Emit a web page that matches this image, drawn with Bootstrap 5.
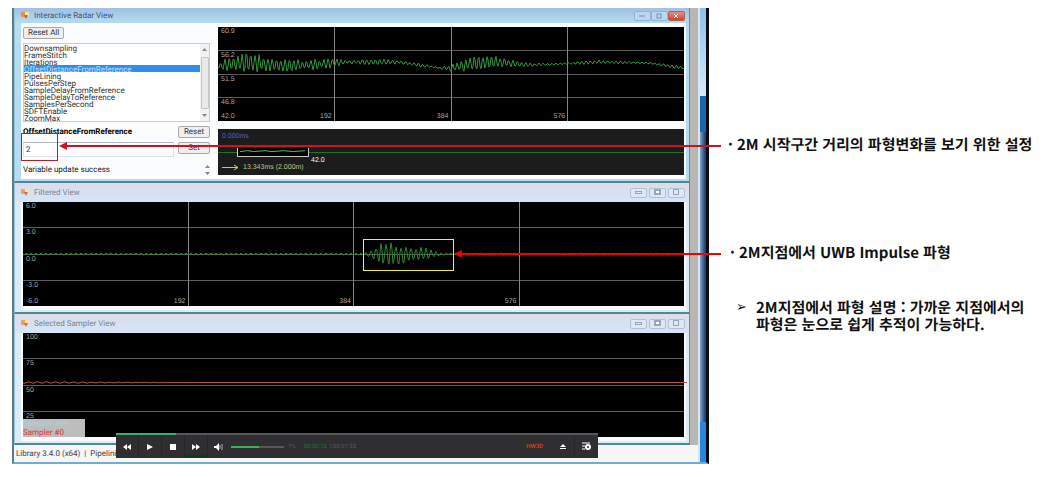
<!DOCTYPE html>
<html lang="ko">
<head>
<meta charset="utf-8">
<meta name="viewport" content="width=device-width, initial-scale=1">
<title>Radar View</title>
<link href="https://cdn.jsdelivr.net/npm/bootstrap@5.3.0/dist/css/bootstrap.min.css" rel="stylesheet">
<style>
body{font-family:Roboto,"Noto Sans CJK KR",sans-serif;font-size:8px;line-height:10px;color:#222;background:#fff;text-rendering:geometricPrecision}
button,input,select{font-family:inherit;text-rendering:inherit}
.page{display:grid;grid-template-columns:697fr 354fr;padding:8px 0 14px 12px}
.screen{background:#b9c9d6;border-left:2px solid #557f8e;border-right:3px solid #0a0c10;border-bottom:2px solid #6ab0d4}
.rail-grey{width:8px;background:#b9b7b4}
.rail-light{width:2px;background:#d8e6f0}
.rail-blue{width:6px;background:linear-gradient(90deg,#7fa6cc,#3c5f8c 60%,#26344a)}
.rail-top{height:88px;background:linear-gradient(#8cc0ea,#d5ecfa)}
.rail-mid{height:36px;background:#1c66ac}
.rail-end{height:40px;background:#2a86dc}
.win{background:#dcecf6;border-right:1px solid #5d939f;border-left:1px solid #9cc3d8;border-bottom:2px solid #4f8793;padding:0 3px 2px 6px}
.win-active{background:#b5dcf0}
.win-title{height:19px;color:#7c8794;background:linear-gradient(#dcdcea,#d3e6f8);margin:0 -3px 0 -6px;padding:0 4px 0 6px}
.win-active .win-title{height:15px;color:#3a5878;background:linear-gradient(#a2bfe4,#b5dcef)}
.win-title .gap-narrow{gap:2px}
.client{background:#fbfcfd;padding:0 2px 4px 2px}
.win-active .client{padding-top:4px}
.ctl{width:17px;height:10px;padding:0;border:1px solid #b4c0d4;border-radius:2px;background:#dde8f6;display:flex;align-items:center;justify-content:center}
.win-active .ctl{border-color:#92b3d6;background:#bcd6ee}
.win-active .ctl-close{background:linear-gradient(#e8907c,#d0432a);border-color:#b8604e}
.side{width:195px}
.btn-win{font-size:8px;line-height:10px;padding:0 4px;border:1px solid #a9a9a9;border-radius:2px;background:#efefef;color:#333}
.btn-pair{width:32px}
.listing{border:1px solid #c9ccd0;height:79px;background:#fff}
.listing select{border:0;outline:0;padding:0;overflow:hidden;background:#fff;height:77px;font-size:8px;color:#333}
.listing option{font-size:8px;line-height:7px;height:7px;min-height:7px;padding:0}
.listing option:checked{background:#2f8eec linear-gradient(#2f8eec,#2f8eec);color:#bfe0ff}
.bar-v{width:9px;background:#f2f2f2;color:#777}
.thumb{width:8px;height:52px;border:1px solid #c6c6c6;border-radius:1px;background:#e9e9e9}
.val{height:15px;border:1px solid #e0e4e8;border-top-color:#b3bcc4;padding:0 2px;font-size:8px;min-width:0;background:#fff;color:#334}
.plot{position:relative;background:#000;color:#a6a6a6;font-family:"Liberation Sans",sans-serif;font-size:7px;line-height:7px;display:flex;flex-direction:column}
.plot-a{height:94px}.plot-b{height:46px;background:#1c1c1c}.plot-c{height:104px}
.lane{flex:1 1 0;padding:1px 3px;display:flex;flex-direction:column;justify-content:space-between}
.lane + .lane{border-top:1px solid #5c5c5c}
.over{position:absolute;inset:0}
.tick{flex:1 1 0;display:flex;align-items:flex-end;justify-content:flex-end;padding:1px 2px}
.tick + .tick{border-left:1px solid #858585}
.plot svg{width:100%;height:100%;display:block;overflow:visible}
.plot path{fill:none;stroke-width:1;vector-effect:non-scaling-stroke}
.legend-box{position:absolute;left:0;bottom:0;width:62px;height:18px;background:#bdbdbd;font-family:Roboto,sans-serif;font-size:8px;line-height:9px}
.sel{position:absolute;left:19px;width:72px;top:19px;height:9px;border:1px solid #c8c8c8;border-top:0;background:#000}
.player{position:absolute;left:102px;right:108px;bottom:4px;background:#2f2f31;color:#5a5a5c;font-size:6px}
.track{height:2px;background:#58585a}
.track div{height:2px;background:#3fae5f}
.pbtn{width:23px;height:23px;padding:0;border:0;border-right:1px solid #27272a;background:transparent;display:flex;align-items:center;justify-content:center}
.pbtn-hot{box-shadow:inset 0 -3px #123a1c}
.status{height:17px;background:#f6f6f6;color:#444;padding:4px 2px}
.mark-box{position:absolute;left:7px;top:125px;width:37px;height:28px;border:1px solid #c01828}
.pick{position:absolute;left:349px;top:231px;width:91px;height:32px;border:1px solid #f2f23a}
.arrow{position:absolute;right:-15px;height:9px;display:flex;align-items:center}
.arrow::before{content:"";border:4px solid transparent;border-right:8px solid currentColor;border-left:0}
.arrow::after{content:"";flex:1;height:2px;background:currentColor}
.arrow-1{left:45px;top:133px;color:#d01020}
.arrow-2{left:440px;top:241px;color:#f00000}
.notes{font-family:"Noto Sans CJK KR",sans-serif;font-weight:700;font-size:15px;line-height:17px;color:#111;padding:128px 0 0 19px}
.notes li{display:flex;gap:4px}
.n2{margin:91px 0 0 2px}.n3{margin:38px 0 0 8px}
.bul{width:5px}.bul-a{width:16px;font-family:"DejaVu Sans",sans-serif;font-weight:400;font-size:13px}
</style>
</head>
<body>
<main class="page">
<section class="screen position-relative d-flex">
 <div class="flex-fill d-flex flex-column" style="min-width:0">
  <div class="d-flex">
   <div class="flex-fill" style="min-width:0">
    <article class="win win-active">
     <header class="win-title d-flex align-items-center gap-1">
      <svg width="9" height="9" viewBox="0 0 9 9"><rect y="1" width="5" height="5" rx="1" fill="#e8913c"/><rect x="4" y="1" width="4" height="4" fill="#f5e6a8"/><path d="M3 4h4l-2 4z" fill="#b9683a"/></svg>
      <span class="me-auto">Interactive Radar View</span>
      <div class="d-flex">
       <button class="ctl" aria-label="Minimize"><svg width="7" height="5"><path d="M0 3h6" stroke="#6c8fb5"/></svg></button>
       <button class="ctl" aria-label="Maximize"><svg width="7" height="6"><rect x="1" y="1" width="4" height="4" fill="none" stroke="#6c8fb5"/></svg></button>
       <button class="ctl ctl-close" aria-label="Close"><svg width="7" height="6"><path d="M1 1l4 4M5 1l-4 4" stroke="#fff"/></svg></button>
      </div>
     </header>
     <div class="client d-flex">
      <form class="side d-flex flex-column pe-2">
       <div class="pb-1"><button type="button" class="btn-win">Reset All</button></div>
       <div class="listing d-flex">
        <select size="11" class="flex-fill" aria-label="Variable">
         <option>Downsampling</option><option>FrameStitch</option><option>Iterations</option><option selected>OffsetDistanceFromReference</option><option>PipeLining</option><option>PulsesPerStep</option><option>SampleDelayFromReference</option><option>SampleDelayToReference</option><option>SamplesPerSecond</option><option>SDFTEnable</option><option>ZoomMax</option>
        </select>
        <div class="bar-v d-flex flex-column align-items-center justify-content-between py-1">
         <svg width="5" height="3"><path d="M0 3l2.500-3 2.500 3z" fill="#888"/></svg><div class="thumb"></div><svg width="5" height="3"><path d="M0 0h5L2.500 3z" fill="#888"/></svg>
        </div>
       </div>
       <div class="d-flex justify-content-between align-items-center pt-1"><label for="v" class="fw-bold text-black">OffsetDistanceFromReference</label><button type="button" class="btn-win btn-pair">Reset</button></div>
       <div class="d-flex pt-1 gap-1"><input id="v" class="val flex-fill" value="2"><button type="button" class="btn-win btn-pair align-self-start">Set</button></div>
       <div class="d-flex justify-content-between pt-2"><span>Variable update success</span><svg width="5" height="10"><path d="M0 3l2.500-3 2.500 3zM0 7h5L2.500 10z" fill="#888"/></svg></div>
      </form>
      <div class="flex-fill d-flex flex-column gap-2">
       <div class="plot plot-a">
        <div class="lane">60.9</div><div class="lane">56.2</div><div class="lane">51.5</div><div class="lane"><span>46.8</span><span>42.0</span></div>
        <div class="over d-flex"><div class="tick">192</div><div class="tick">384</div><div class="tick">576</div><div class="tick"></div></div>
        <div class="over"><svg viewBox="0 0 466 94" preserveAspectRatio="none"><path id="radar" stroke="#2f9a3c"/></svg></div>
       </div>
       <div class="plot plot-b justify-content-between p-1">
        <span style="color:#5560c8">0.000ms</span>
        <div class="over"><svg viewBox="0 0 466 46" preserveAspectRatio="none"><path d="M0 23.500H466" stroke="#127a2c"/></svg></div>
        <div class="sel"><svg viewBox="0 0 72 9" preserveAspectRatio="none"><path d="M2 4l8-1 6 1 12-1 7 1 12-1 10 1 12-1" stroke="#2fd070"/></svg></div>
        <span class="position-absolute text-light" style="left:93px;top:28px">42.0</span>
        <span class="d-flex gap-1" style="color:#c4c484"><svg style="width:17px;height:7px" viewBox="0 0 17 7"><path d="M0 3.500h16M12 1l4 2.500L12 6" stroke="#c4c484"/></svg>13.343ms (2.000m)</span>
       </div>
      </div>
     </div>
    </article>
    <article class="win">
     <header class="win-title d-flex align-items-center gap-1">
      <svg width="9" height="9" viewBox="0 0 9 9"><rect y="1" width="5" height="5" rx="1" fill="#e8a35c"/><rect x="4" y="1" width="4" height="4" fill="#f5e6a8"/><path d="M3 4h4l-2 4z" fill="#b9785a"/></svg>
      <span class="me-auto">Filtered View</span>
      <div class="d-flex gap-narrow">
       <button class="ctl" aria-label="Minimize"><svg width="7" height="5"><rect x="0.500" y="1.500" width="6" height="2" fill="none" stroke="#98a6ba"/></svg></button>
       <button class="ctl" aria-label="Maximize"><svg width="7" height="7"><rect x="0.500" y="0.500" width="6" height="5" fill="#98a6ba" stroke="#98a6ba"/><rect x="2" y="2" width="3" height="2" fill="#fff"/></svg></button>
       <button class="ctl" aria-label="Close"><svg width="7" height="7"><rect x="0.500" y="0.500" width="5" height="5" fill="none" stroke="#98a6ba"/></svg></button>
      </div>
     </header>
     <div class="client">
      <div class="plot plot-c">
       <div class="lane">6.0</div><div class="lane">3.0</div><div class="lane">0.0</div><div class="lane"><span>-3.0</span><span>-6.0</span></div>
       <div class="over d-flex"><div class="tick">192</div><div class="tick">384</div><div class="tick">576</div><div class="tick"></div></div>
       <div class="over"><svg viewBox="0 0 661 104" preserveAspectRatio="none"><path id="filtered" stroke="#2b8a30"/></svg></div>
      </div>
     </div>
    </article>
    <article class="win">
     <header class="win-title d-flex align-items-center gap-1">
      <svg width="9" height="9" viewBox="0 0 9 9"><rect y="1" width="5" height="5" rx="1" fill="#e8a35c"/><rect x="4" y="1" width="4" height="4" fill="#f5e6a8"/><path d="M3 4h4l-2 4z" fill="#b9785a"/></svg>
      <span class="me-auto">Selected Sampler View</span>
      <div class="d-flex gap-narrow">
       <button class="ctl" aria-label="Minimize"><svg width="7" height="5"><rect x="0.500" y="1.500" width="6" height="2" fill="none" stroke="#98a6ba"/></svg></button>
       <button class="ctl" aria-label="Maximize"><svg width="7" height="7"><rect x="0.500" y="0.500" width="6" height="5" fill="#98a6ba" stroke="#98a6ba"/><rect x="2" y="2" width="3" height="2" fill="#fff"/></svg></button>
       <button class="ctl" aria-label="Close"><svg width="7" height="7"><rect x="0.500" y="0.500" width="5" height="5" fill="none" stroke="#98a6ba"/></svg></button>
      </div>
     </header>
     <div class="client">
      <div class="plot plot-c">
       <div class="lane">100</div><div class="lane">75</div><div class="lane">50</div><div class="lane">25</div>
       <div class="over"><svg viewBox="0 0 661 104" preserveAspectRatio="none"><path id="sampler" stroke="#b4544e"/></svg></div>
       <div class="legend-box"><div style="color:#a9d4d8">Sampler #39</div><div class="text-danger">Sampler #0</div></div>
      </div>
     </div>
    </article>
   </div>
   <div class="rail-grey"></div>
  </div>
  <footer class="status mt-auto">Library 3.4.0 (x64) &nbsp;|&nbsp; Pipelining</footer>
 </div>
 <div class="rail-light"></div>
 <div class="rail-blue d-flex flex-column"><div class="rail-top"></div><div class="rail-mid"></div><div class="rail-end mt-auto"></div></div>
 <div class="player">
  <div class="track"><div style="width:12.5%"></div></div>
  <div class="d-flex align-items-center">
   <button class="pbtn" aria-label="Rewind"><svg width="9" height="6"><path d="M4 0v6L0 3zM8 0v6L4 3z" fill="#fff"/></svg></button>
   <button class="pbtn" aria-label="Play"><svg width="6" height="6"><path d="M0 0l6 3-6 3z" fill="#fff"/></svg></button>
   <button class="pbtn" aria-label="Stop"><svg width="6" height="6"><rect width="6" height="6" fill="#fff"/></svg></button>
   <button class="pbtn pbtn-hot" aria-label="Forward"><svg width="9" height="6"><path d="M0 0v6l4-3zM4 0v6l4-3z" fill="#fff"/></svg></button>
   <button class="pbtn border-0" aria-label="Volume"><svg width="11" height="8"><path d="M0 3h2l3-3v8L2 5H0z" fill="#fff"/><path d="M6 2v4M8 1v6" stroke="#aaa" fill="none"/></svg></button>
   <div style="width:53px" class="track"><div style="width:53%"></div></div>
   <span class="ms-1">1%</span>
   <span class="ms-2"><span style="color:#25713c">00:00:12</span> &nbsp;|&nbsp;00:01:35</span>
   <span class="ms-auto me-2 fw-bold" style="color:#c8400f">HW3D</span>
   <button class="pbtn" style="width:24px" aria-label="Eject"><svg width="6" height="6"><path d="M3 0l3 3H0zM0 4h6v1H0z" fill="#fff"/></svg></button>
   <button class="pbtn border-0" aria-label="Playlist"><svg width="10" height="9"><path d="M0 1h8M0 4h3M0 7h3" stroke="#fff" fill="none"/><circle cx="6" cy="5" r="2" fill="none" stroke="#fff" stroke-width="2"/></svg></button>
  </div>
 </div>
 <div class="mark-box"></div><div class="pick"></div>
 <div class="arrow arrow-1"></div><div class="arrow arrow-2"></div>
</section>
<ul class="notes list-unstyled mb-0">
 <li><span class="bul">·</span><span>2M 시작구간 거리의 파형변화를 보기 위한 설정</span></li>
 <li class="n2"><span class="bul">·</span><span>2M지점에서 UWB Impulse 파형</span></li>
 <li class="n3"><span class="bul-a">➢</span><span>2M지점에서 파형 설명 : 가까운 지점에서의<br>파형은 눈으로 쉽게 추적이 가능하다.</span></li>
</ul>
</main>
<script src="https://cdn.jsdelivr.net/npm/bootstrap@5.3.0/dist/js/bootstrap.bundle.min.js"></script>
<script>
// Each key point is [x, centre, amplitude]; values between are interpolated.
function trace(id, keys, step, period) {
  let seed = 7, d = "", i = 0;
  const end = keys[keys.length - 1][0];
  for (let x = 0; x <= end; x += step) {
    while (i < keys.length - 2 && x > keys[i + 1][0]) i++;
    const a = keys[i], b = keys[i + 1], t = (x - a[0]) / (b[0] - a[0]);
    seed = (seed * 16807) % 2147483647;
    const r = 0.5 + 0.6 * seed / 2147483647;
    const y = a[1] + (b[1] - a[1]) * t + (a[2] + (b[2] - a[2]) * t) * r * Math.sin(2 * Math.PI * x / period + 0.9);
    d += (d ? "L" : "M") + x + " " + y.toFixed(1);
  }
  document.getElementById(id).setAttribute("d", d);
}
trace("radar", [[0,39,2],[8,38,7],[18,37,7],[30,36,11],[38,36,11],[46,37,7],[70,39,7],[90,38,5],[115,36,5],[125,35,2],[160,35,3],[180,35,2],[200,38,2],[222,41,1],[235,41,4],[252,37,8],[275,35,6],[290,36,4],[310,38,2],[340,37,1],[380,35,2],[430,36,1],[466,41,2]], 1, 4.3);
trace("filtered", [[0,52,1],[340,52,1],[350,52,6],[360,52,12],[370,52,12],[395,52,8],[412,52,3],[425,52,1],[661,52,1]], 1, 5);
trace("sampler", [[0,49.5,1],[190,49.5,0],[661,49.5,0],[664,49.5,0]], 2, 9);
</script>
</body>
</html>
